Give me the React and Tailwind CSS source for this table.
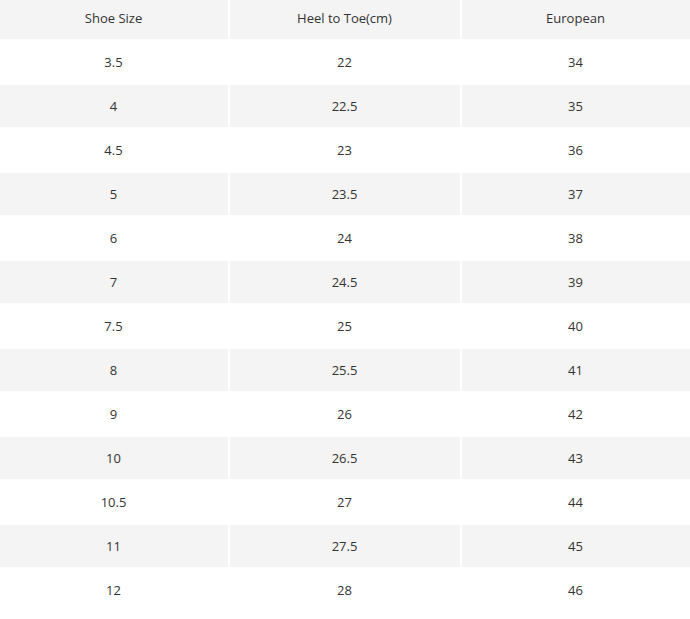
const rows = [
  ["3.5", "22", "34"],
  ["4", "22.5", "35"],
  ["4.5", "23", "36"],
  ["5", "23.5", "37"],
  ["6", "24", "38"],
  ["7", "24.5", "39"],
  ["7.5", "25", "40"],
  ["8", "25.5", "41"],
  ["9", "26", "42"],
  ["10", "26.5", "43"],
  ["10.5", "27", "44"],
  ["11", "27.5", "45"],
  ["12", "28", "46"],
];

const header = ["Shoe Size", "Heel to Toe(cm)", "European"];

export default function App() {
  return (
    <div className="min-h-screen bg-white font-['Open_Sans',sans-serif] text-[13px] text-[#333]">
      <div className="grid grid-cols-[228px_230px_1fr] gap-[2px]">
        {header.map((h) => (
          <div key={h} className="flex h-[39px] items-center justify-center bg-[#f4f4f4] pb-[2px] pr-[1px]">
            {h}
          </div>
        ))}
        {rows.map((r, i) =>
          r.map((c, j) => (
            <div
              key={i + "-" + j}
              className={`flex h-[42px] items-center justify-center pt-[1px] pr-[1px] ${
                i % 2 === 1 ? "bg-[#f4f4f4]" : "bg-white"
              }`}
            >
              {c}
            </div>
          ))
        )}
      </div>
    </div>
  );
}
